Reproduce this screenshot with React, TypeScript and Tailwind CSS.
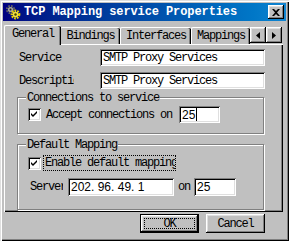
import React from "react";

const mono = "font-['Liberation_Mono',monospace] text-[12px] tracking-[-1.2px] leading-[14px] text-black";
const raised =
  "bg-[#c0c0c0] shadow-[inset_-1px_-1px_#000,inset_1px_1px_#fff,inset_-2px_-2px_#808080,inset_2px_2px_#dfdfdf]";
const sunken =
  "bg-white shadow-[inset_1px_1px_#808080,inset_-1px_-1px_#fff,inset_2px_2px_#000,inset_-2px_-2px_#dfdfdf]";

function Gears() {
  return (
    <svg width="16" height="16" viewBox="0 0 16 16" className="shrink-0">
      <circle cx="5.5" cy="5.5" r="3.3" fill="none" stroke="#606060" strokeWidth="2.6" strokeDasharray="1.6 1" />
      <circle cx="5.5" cy="5.5" r="2.6" fill="#a0a0a0" />
      <circle cx="5.5" cy="5.5" r="1" fill="#202020" />
      <circle cx="10.5" cy="10.5" r="3.6" fill="none" stroke="#e8d000" strokeWidth="2.6" strokeDasharray="1.6 1" />
      <circle cx="10.5" cy="10.5" r="2.8" fill="#f0e040" />
      <circle cx="10.5" cy="10.5" r="1.2" fill="#404000" />
    </svg>
  );
}

function Check() {
  return (
    <div className={`${sunken} w-[13px] h-[13px] shrink-0 flex items-center justify-center`}>
      <svg width="7" height="7" viewBox="0 0 7 7">
        <path d="M0 2 L2 4 L6 0 L6 2 L2 6 L0 4 Z" fill="#000" />
      </svg>
    </div>
  );
}

function Tab({ label, w, selected }: { label: string; w: number; selected?: boolean }) {
  return (
    <div
      style={{ width: w }}
      className={
        selected
          ? `relative z-10 shrink-0 h-[20px] -mb-[1px] -mr-[1px] bg-[#c0c0c0] border-l border-t border-white shadow-[inset_-1px_0_#000,inset_-2px_0_#808080] rounded-tl-[2px] rounded-tr-[2px] flex items-center justify-center pb-[3px] ${mono}`
          : `shrink-0 h-[17px] bg-[#c0c0c0] border-l border-t border-white shadow-[inset_-1px_0_#000,inset_-2px_0_#808080] rounded-tl-[2px] rounded-tr-[2px] flex items-center justify-center ${mono}`
      }
    >
      <span className="whitespace-nowrap">{label}</span>
    </div>
  );
}

function ArrowBtn({ dir }: { dir: "l" | "r" }) {
  return (
    <div className={`${raised} w-[16px] h-[16px] flex items-center justify-center shrink-0`}>
      <svg width="4" height="7" viewBox="0 0 4 7">
        {dir === "l" ? <path d="M4 0 L0 3.5 L4 7 Z" fill="#000" /> : <path d="M0 0 L4 3.5 L0 7 Z" fill="#000" />}
      </svg>
    </div>
  );
}

function Group({ label, h, children }: { label: string; h: number; children: React.ReactNode }) {
  return (
    <div
      style={{ height: h }}
      className="relative ml-[12px] w-[247px] border border-[#808080] shadow-[inset_1px_1px_#fff,1px_1px_#fff]"
    >
      <div className={`absolute left-[8px] -top-[7px] bg-[#c0c0c0] px-[1px] ${mono}`}>{label}</div>
      {children}
    </div>
  );
}

export default function App() {
  return (
    <div className="w-[289px] h-[241px] overflow-hidden bg-[#c0c0c0] pt-[3px] pl-[3px] shadow-[inset_1px_1px_#dfdfdf,inset_2px_2px_#fff,inset_-1px_-1px_#000,inset_-2px_-2px_#808080] flex flex-col">
      {/* Title bar */}
      <div className="w-[283px] h-[18px] bg-linear-to-r from-[#000080] to-[#1084d0] flex items-center pl-[2px] pr-[2px]">
        <Gears />
        <div className="ml-[3px] font-['Liberation_Mono',monospace] font-bold text-[12px] tracking-[-0.1px] text-white whitespace-nowrap leading-[14px]">
          TCP Mapping service Properties
        </div>
        <div className={`${raised} ml-auto w-[16px] h-[14px] flex items-center justify-center`}>
          <svg width="8" height="7" viewBox="0 0 8 7">
            <path d="M0 0 H2 L4 2 L6 0 H8 L5 3.5 L8 7 H6 L4 5 L2 7 H0 L3 3.5 Z" fill="#000" />
          </svg>
        </div>
      </div>

      {/* Tabs */}
      <div className="h-[23px] w-[280px] ml-[1px] flex items-end">
        <Tab label="General" w={57} selected />
        <Tab label="Bindings" w={60} />
        <Tab label="Interfaces" w={71} />
        <Tab label="Mappings" w={59} />
        <div className="flex mb-[1px]">
          <ArrowBtn dir="l" />
          <ArrowBtn dir="r" />
        </div>
      </div>

      {/* Panel */}
      <div className="ml-[1px] w-[279px] h-[168px] border-l border-t border-white shadow-[inset_-1px_-1px_#000,inset_-2px_-2px_#808080] flex flex-col">
        <div className="mt-[4px] flex items-center h-[17px]">
          <div className={`ml-[14px] w-[81px] ${mono}`}>Service</div>
          <div className={`${sunken} w-[165px] h-[17px] pl-[3px] flex items-center ${mono}`}>SMTP Proxy Services</div>
        </div>
        <div className="mt-[6px] flex items-center h-[17px]">
          <div className="ml-[14px] w-[81px]">
            <div className={`w-[55px] overflow-hidden whitespace-nowrap ${mono}`}>Description</div>
          </div>
          <div className={`${sunken} w-[165px] h-[17px] pl-[3px] flex items-center ${mono}`}>SMTP Proxy Services</div>
        </div>

        <div className="mt-[8px]">
          <Group label="Connections to service" h={37}>
            <div className="flex items-center mt-[8px] ml-[10px]">
              <Check />
              <div className={`ml-[5px] w-[133px] whitespace-nowrap ${mono}`}>Accept connections on</div>
              <div className={`${sunken} w-[41px] h-[17px] pl-[3px] flex items-center font-['Liberation_Sans',sans-serif] text-[12px] text-black`}>
                25<span className="inline-block w-[1px] h-[13px] bg-black ml-[1px]" />
              </div>
            </div>
          </Group>
        </div>

        <div className="mt-[10px]">
          <Group label="Default Mapping" h={66}>
            <div className="flex items-center mt-[10px] ml-[10px]">
              <Check />
              <div className="ml-[2px] w-[133px] h-[16px] border border-dotted border-black overflow-hidden flex items-center">
                <div className={`ml-[1px] whitespace-nowrap ${mono}`}>Enable default mapping</div>
              </div>
            </div>
            <div className="flex items-center mt-[7px] ml-[12px] h-[18px]">
              <div className="w-[38px]">
                <div className={`w-[33px] overflow-hidden whitespace-nowrap ${mono}`}>Server</div>
              </div>
              <div className={`${sunken} w-[106px] h-[18px] pl-[3px] flex items-center font-['Liberation_Sans',sans-serif] text-[12px] text-black`}>
                202. 96. 49. 1
              </div>
              <div className={`ml-[4px] w-[16px] ${mono}`}>on</div>
              <div className={`${sunken} w-[42px] h-[18px] pl-[3px] flex items-center font-['Liberation_Sans',sans-serif] text-[12px] text-black`}>
                25
              </div>
            </div>
          </Group>
        </div>
      </div>

      {/* Buttons */}
      <div className="mt-[2px] flex">
        <div className="ml-[137px] w-[59px] h-[19px] border border-black shadow-[inset_-1px_-1px_#000,inset_1px_1px_#fff,inset_-2px_-2px_#808080,inset_2px_2px_#dfdfdf] bg-[#c0c0c0] p-[3px]">
          <div className={`w-full h-full border border-dotted border-black flex items-center justify-center ${mono}`}>OK</div>
        </div>
        <div className={`ml-[7px] w-[59px] h-[19px] ${raised} flex items-center justify-center ${mono}`}>Cancel</div>
      </div>
    </div>
  );
}
